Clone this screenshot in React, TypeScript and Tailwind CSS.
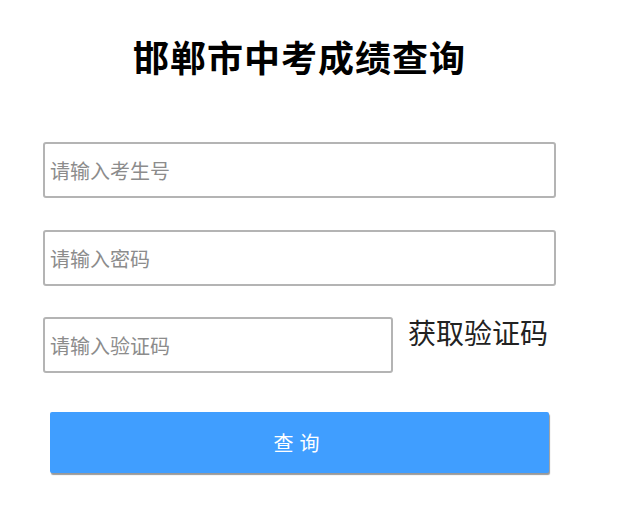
export default function App() {
    const font = { fontFamily: '"Microsoft YaHei", "Noto Sans CJK SC", sans-serif' };
    return (
        <div className="w-[622px] h-[510px] bg-white" style={font}>
            <div className="w-[513px] ml-[43px] pt-[32px] flex flex-col">
                <h1 className="text-[36px] leading-[48px] font-bold text-black text-center tracking-[1px]">
                    邯郸市中考成绩查询
                </h1>
                <div className="mt-[62px] flex flex-col">
                    <input
                        className="h-[56px] w-full border-2 border-[#b4b4b4] rounded-[3px] px-[5px] text-[20px] text-[#333] placeholder:text-[#8c8c8c] outline-none"
                        placeholder="请输入考生号"
                    />
                    <input
                        className="mt-[32px] h-[56px] w-full border-2 border-[#b4b4b4] rounded-[3px] px-[5px] text-[20px] text-[#333] placeholder:text-[#8c8c8c] outline-none"
                        placeholder="请输入密码"
                    />
                    <div className="mt-[31px] flex items-start">
                        <input
                            className="h-[56px] w-[350px] border-2 border-[#b4b4b4] rounded-[3px] px-[5px] text-[20px] text-[#333] placeholder:text-[#8c8c8c] outline-none"
                            placeholder="请输入验证码"
                        />
                        <span className="ml-[15px] -mt-[2px] text-[28px] leading-[34px] text-[#222]">获取验证码</span>
                    </div>
                    <button className="mt-[39px] ml-[7px] w-[499px] h-[61px] bg-[#409eff] text-white text-[20px] tracking-[6px] rounded-[2px] shadow-[1px_2px_1px_rgba(0,0,0,0.4)]">
                        查询
                    </button>
                </div>
            </div>
        </div>
    );
}
